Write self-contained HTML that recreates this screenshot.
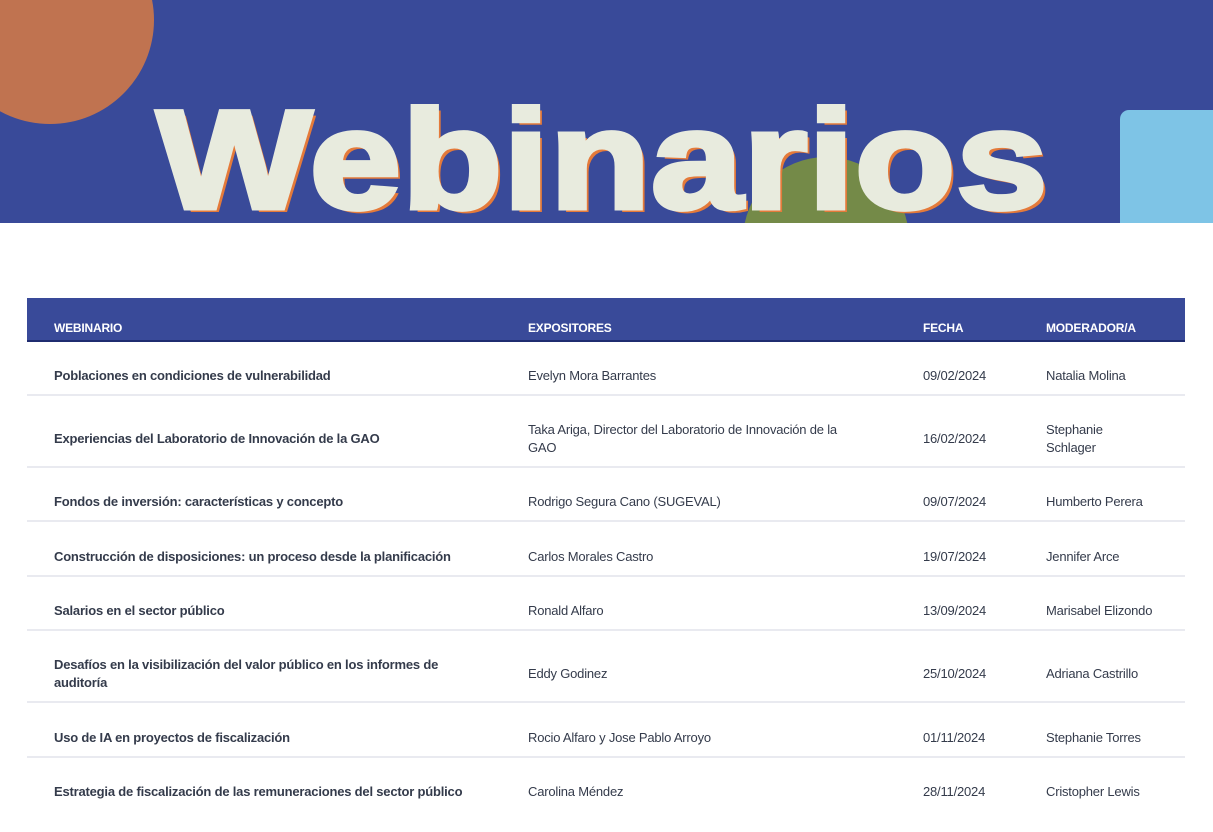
<!DOCTYPE html>
<html><head><meta charset="utf-8"><style>
*{margin:0;padding:0;box-sizing:border-box}
body{width:1213px;height:832px;background:#fff;position:relative;overflow:hidden;font-family:"Liberation Sans",Arial,sans-serif;color:#343b4b}
.banner{position:absolute;left:0;top:0;width:1213px;height:223px;background:#394a99;overflow:hidden}
.c1{position:absolute;left:-54px;top:-84px;width:208px;height:208px;border-radius:50%;background:#c07350}
.c2{position:absolute;left:743px;top:157px;width:166px;height:166px;border-radius:50%;background:#748a48}
.rb{position:absolute;left:1120px;top:110px;width:110px;height:130px;border-radius:9px;background:#7ec4e6}
.title{position:absolute;left:157px;top:90px;font-size:140px;font-weight:bold;line-height:1;white-space:nowrap;transform-origin:0 0;transform:scaleX(1.17);color:#e8ebde;-webkit-text-stroke:5px #e8ebde;text-shadow:4px 4px 0 #e47a3a;letter-spacing:1px}
.hdr{position:absolute;left:27px;top:298px;width:1158px;height:44px;background:#394a99;border-bottom:2px solid #1f2c70}
.h{position:absolute;top:321px;color:#fff;font-weight:bold;font-size:12px;letter-spacing:-0.2px}
.t{position:absolute;font-size:13px;white-space:nowrap;line-height:18px;letter-spacing:-0.2px}
.b{font-weight:bold}
.sep{position:absolute;left:27px;width:1158px;height:2px;background:#e9eaf0}
</style></head><body>
<div class="banner"><div class="c1"></div><div class="c2"></div><div class="rb"></div><div class="title">Webinarios</div></div>
<div class="hdr"></div>
<div class="h" style="left:54px">WEBINARIO</div>
<div class="h" style="left:528px">EXPOSITORES</div>
<div class="h" style="left:923px">FECHA</div>
<div class="h" style="left:1046px">MODERADOR/A</div>

<div class="t b" style="left:54px;top:367px">Poblaciones en condiciones de vulnerabilidad</div>
<div class="t" style="left:528px;top:367px">Evelyn Mora Barrantes</div>
<div class="t" style="left:923px;top:367px">09/02/2024</div>
<div class="t" style="left:1046px;top:367px">Natalia Molina</div>
<div class="sep" style="top:394px"></div>

<div class="t b" style="left:54px;top:430px">Experiencias del Laboratorio de Innovación de la GAO</div>
<div class="t" style="left:528px;top:421px">Taka Ariga, Director del Laboratorio de Innovación de la<br>GAO</div>
<div class="t" style="left:923px;top:430px">16/02/2024</div>
<div class="t" style="left:1046px;top:421px">Stephanie<br>Schlager</div>
<div class="sep" style="top:466px"></div>

<div class="t b" style="left:54px;top:493px">Fondos de inversión: características y concepto</div>
<div class="t" style="left:528px;top:493px">Rodrigo Segura Cano (SUGEVAL)</div>
<div class="t" style="left:923px;top:493px">09/07/2024</div>
<div class="t" style="left:1046px;top:493px">Humberto Perera</div>
<div class="sep" style="top:520px"></div>

<div class="t b" style="left:54px;top:548px">Construcción de disposiciones: un proceso desde la planificación</div>
<div class="t" style="left:528px;top:548px">Carlos Morales Castro</div>
<div class="t" style="left:923px;top:548px">19/07/2024</div>
<div class="t" style="left:1046px;top:548px">Jennifer Arce</div>
<div class="sep" style="top:575px"></div>

<div class="t b" style="left:54px;top:602px">Salarios en el sector público</div>
<div class="t" style="left:528px;top:602px">Ronald Alfaro</div>
<div class="t" style="left:923px;top:602px">13/09/2024</div>
<div class="t" style="left:1046px;top:602px">Marisabel Elizondo</div>
<div class="sep" style="top:629px"></div>

<div class="t b" style="left:54px;top:656px">Desafíos en la visibilización del valor público en los informes de<br>auditoría</div>
<div class="t" style="left:528px;top:665px">Eddy Godinez</div>
<div class="t" style="left:923px;top:665px">25/10/2024</div>
<div class="t" style="left:1046px;top:665px">Adriana Castrillo</div>
<div class="sep" style="top:701px"></div>

<div class="t b" style="left:54px;top:729px">Uso de IA en proyectos de fiscalización</div>
<div class="t" style="left:528px;top:729px">Rocio Alfaro y Jose Pablo Arroyo</div>
<div class="t" style="left:923px;top:729px">01/11/2024</div>
<div class="t" style="left:1046px;top:729px">Stephanie Torres</div>
<div class="sep" style="top:756px"></div>

<div class="t b" style="left:54px;top:783px">Estrategia de fiscalización de las remuneraciones del sector público</div>
<div class="t" style="left:528px;top:783px">Carolina Méndez</div>
<div class="t" style="left:923px;top:783px">28/11/2024</div>
<div class="t" style="left:1046px;top:783px">Cristopher Lewis</div>
</body></html>
